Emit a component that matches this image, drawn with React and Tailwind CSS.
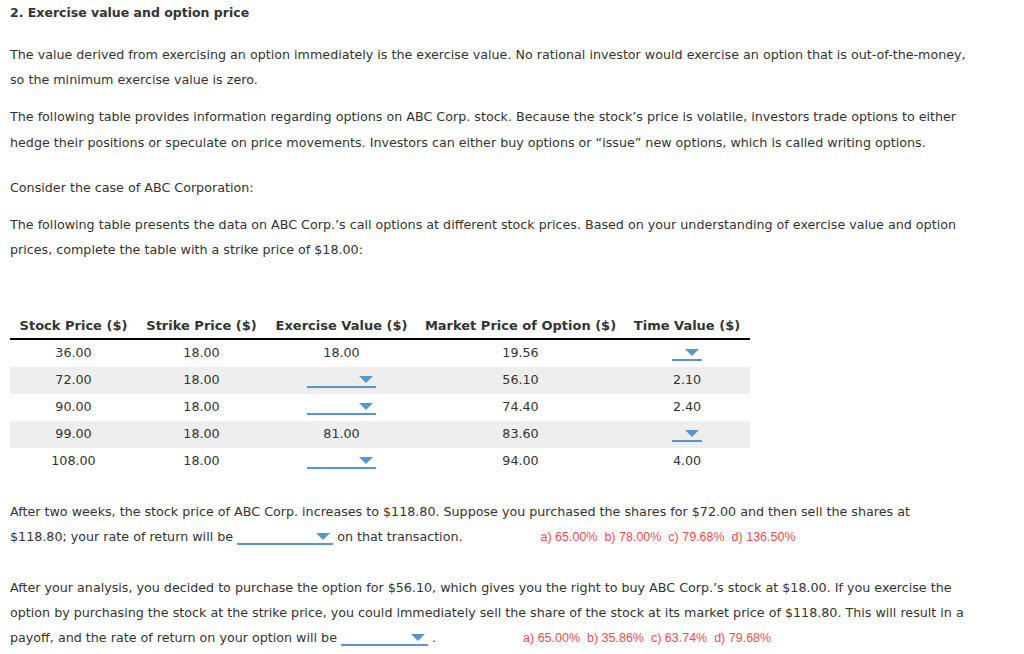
import React from 'react';

const Dropdown = ({ width }) => {
  return (
    <span
      className="relative inline-block align-[-4px] h-[18px] border-b-2 border-[#5896cb]"
      style={{ width }}
    >
      <span className="absolute right-[3px] top-[6px] w-0 h-0 border-l-[7px] border-r-[7px] border-t-[7px] border-l-transparent border-r-transparent border-t-[#5896cb]"></span>
    </span>
  );
};

const rows = [
  { stock: '36.00', strike: '18.00', exercise: '18.00', market: '19.56', time: null },
  { stock: '72.00', strike: '18.00', exercise: null, market: '56.10', time: '2.10' },
  { stock: '90.00', strike: '18.00', exercise: null, market: '74.40', time: '2.40' },
  { stock: '99.00', strike: '18.00', exercise: '81.00', market: '83.60', time: null },
  { stock: '108.00', strike: '18.00', exercise: null, market: '94.00', time: '4.00' },
];

const App = () => {
  return (
    <div className="w-[1024px] h-[654px] overflow-hidden bg-white px-[10px] text-[12.7px] leading-[25px] text-[#333] font-['DejaVu_Sans',Verdana,sans-serif]">
      <h2 className="font-bold text-[12.5px]">2. Exercise value and option price</h2>

      <p className="mt-[17px]">
        The value derived from exercising an option immediately is the exercise value. No rational investor would exercise an option that is out-of-the-money,
        <br />
        so the minimum exercise value is zero.
      </p>

      <p className="mt-[12px] leading-[26px]">
        The following table provides information regarding options on ABC Corp. stock. Because the stock’s price is volatile, investors trade options to either
        <br />
        hedge their positions or speculate on price movements. Investors can either buy options or “issue” new options, which is called writing options.
      </p>

      <p className="mt-[19px]">Consider the case of ABC Corporation:</p>

      <p className="mt-[12px]">
        The following table presents the data on ABC Corp.’s call options at different stock prices. Based on your understanding of exercise value and option
        <br />
        prices, complete the table with a strike price of $18.00:
      </p>

      <table className="mt-[52px] w-[740px] table-fixed border-collapse">
        <colgroup>
          <col className="w-[127px]" />
          <col className="w-[129px]" />
          <col className="w-[151px]" />
          <col className="w-[207px]" />
          <col className="w-[126px]" />
        </colgroup>
        <thead>
          <tr className="h-[25px] border-b-2 border-black">
            <th className="font-bold text-[13px] text-center leading-[24px] align-top">Stock Price ($)</th>
            <th className="font-bold text-[13px] text-center leading-[24px] align-top">Strike Price ($)</th>
            <th className="font-bold text-[13px] text-center leading-[24px] align-top">Exercise Value ($)</th>
            <th className="font-bold text-[13px] text-center leading-[24px] align-top">Market Price of Option ($)</th>
            <th className="font-bold text-[13px] text-center leading-[24px] align-top">Time Value ($)</th>
          </tr>
        </thead>
        <tbody>
          {rows.map((r, i) => (
            <tr key={i} className={i % 2 === 1 ? 'h-[27px] bg-[#eeeeee]' : 'h-[27px]'}>
              <td className="text-center pb-[2px]">{r.stock}</td>
              <td className="text-center pb-[2px]">{r.strike}</td>
              <td className="text-center pb-[2px]">{r.exercise ?? <Dropdown width={69} />}</td>
              <td className="text-center pb-[2px]">{r.market}</td>
              <td className="text-center pb-[2px]">{r.time ?? <Dropdown width={30} />}</td>
            </tr>
          ))}
        </tbody>
      </table>

      <p className="mt-[24px]">
        After two weeks, the stock price of ABC Corp. increases to $118.80. Suppose you purchased the shares for $72.00 and then sell the shares at
        <br />
        $118.80; your rate of return will be <Dropdown width={96} /> on that transaction.
        <span className="ml-[78px] whitespace-pre text-[12.5px] text-[#ff4b4b] font-['Liberation_Sans',Arial,sans-serif]">a) 65.00%{'  '}b) 78.00%{'  '}c) 79.68%{'  '}d) 136.50%</span>
      </p>

      <p className="mt-[25px]">
        After your analysis, you decided to purchase the option for $56.10, which gives you the right to buy ABC Corp.’s stock at $18.00. If you exercise the
        <br />
        option by purchasing the stock at the strike price, you could immediately sell the share of the stock at its market price of $118.80. This will result in a
        <br />
        payoff, and the rate of return on your option will be <Dropdown width={87} /> .
        <span className="ml-[87px] whitespace-pre text-[12.5px] text-[#ff4b4b] font-['Liberation_Sans',Arial,sans-serif]">a) 65.00%{'  '}b) 35.86%{'  '}c) 63.74%{'  '}d) 79.68%</span>
      </p>
    </div>
  );
};

export default App;
